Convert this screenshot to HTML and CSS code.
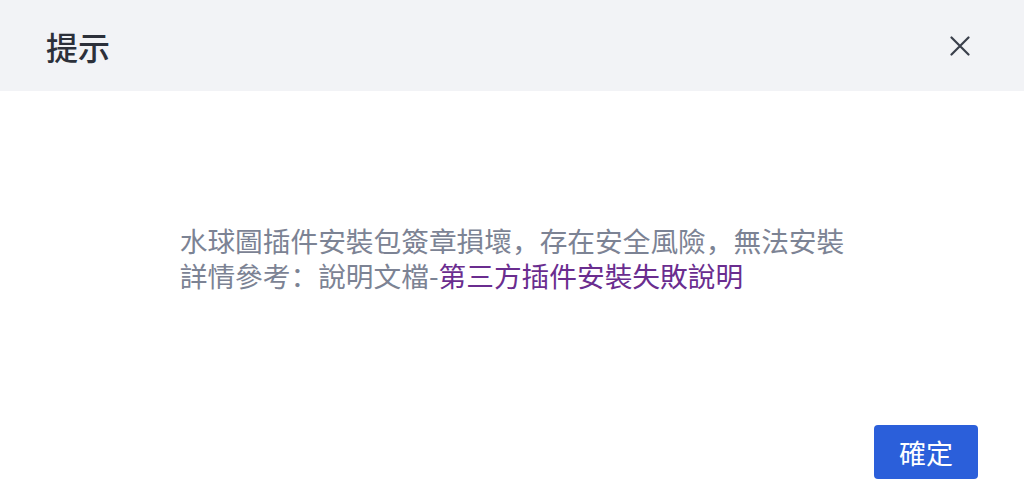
FILE: index.html
```html
<!DOCTYPE html>
<html lang="zh-CN">
<head>
<meta charset="utf-8">
<link rel="stylesheet" href="styles.css">
</head>
<body>
<div class="dialog">
  <div class="header">
    <span class="title">提示</span>
    <span class="close" aria-label="close">
      <svg width="20" height="20" viewBox="0 0 20 20"><path d="M1.5 1.5 L18.5 18.5 M18.5 1.5 L1.5 18.5" stroke="#3a3f4b" stroke-width="2.2" stroke-linecap="round" fill="none"/></svg>
    </span>
  </div>
  <div class="body">
    <div class="msg">
      <div>水球圖插件安裝包簽章損壞，存在安全風險，無法安裝</div>
      <div>詳情參考：說明文檔-<a class="link">第三方插件安裝失敗說明</a></div>
    </div>
  </div>
  <div class="footer">
    <button class="ok">確定</button>
  </div>
</div>
</body>
</html>
```

FILE: styles.css
```css
html, body {
  margin: 0;
  padding: 0;
  background: #ffffff;
}
body {
  font-family: "Noto Sans CJK SC", "Noto Sans CJK TC", "Noto Sans", sans-serif;
}
.dialog {
  width: 1024px;
  height: 500px;
  display: flex;
  flex-direction: column;
}
.header {
  height: 91px;
  flex: none;
  background: #f2f3f6;
  display: flex;
  align-items: center;
  justify-content: space-between;
  padding: 0 54px 0 46px;
}
.title {
  font-size: 32px;
  color: #2c303a;
  font-weight: 500;
}
.close {
  display: flex;
  width: 20px;
  height: 20px;
  align-items: center;
  justify-content: center;
}
.body {
  flex: 1;
  display: flex;
  align-items: center;
  justify-content: center;
}
.msg {
  font-size: 27.7px;
  line-height: 35px;
  color: #7c8394;
  font-weight: 400;
  text-align: left;
}
.link {
  color: #6a2d8f;
  text-decoration: none;
}
.footer {
  display: flex;
  justify-content: flex-end;
  padding: 0 46px 21px;
}
.ok {
  width: 104px;
  height: 54px;
  border: none;
  border-radius: 4px;
  background: #2b5fda;
  color: #ffffff;
  font-family: "Noto Sans CJK SC", "Noto Sans CJK TC", sans-serif;
  font-size: 27px;
  font-weight: 400;
  padding: 0;
}
```
